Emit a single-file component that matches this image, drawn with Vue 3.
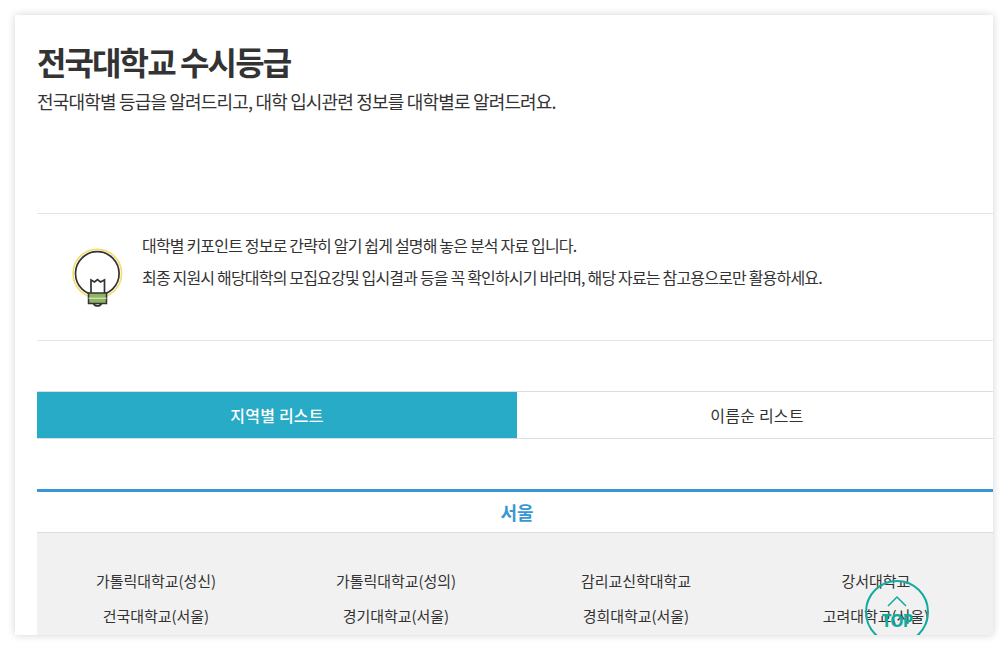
<template>
  <div class="page">
    <div class="card">
      <div class="head">
        <h1>전국대학교 수시등급</h1>
        <p>전국대학별 등급을 알려드리고, 대학 입시관련 정보를 대학별로 알려드려요.</p>
      </div>

      <div class="notice">
        <svg class="bulb" width="54" height="62" viewBox="0 0 54 62">
          <circle cx="27.3" cy="25.5" r="24.3" fill="#fff" stroke="#f6dc6a" stroke-width="1.6" />
          <circle cx="27.3" cy="25.5" r="21.8" fill="#fff" stroke="#333" stroke-width="1.7" />
          <path d="M21 45V32l3.5 2 3-2.5 3 2.5 4-2v13" fill="#fff" stroke="#333" stroke-width="1.7" />
          <path d="M23.5 55.5a4.5 4.5 0 0 0 8 0" fill="#fff" stroke="#333" stroke-width="1.7" />
          <rect x="18.5" y="45" width="18" height="10.5" fill="#8fb564" stroke="#333" stroke-width="1.5" />
          <path d="M18.5 50.2h18" stroke="#e8efd8" stroke-width="1" />
        </svg>
        <div class="notice-text">
          <p>대학별 키포인트 정보로 간략히 알기 쉽게 설명해 놓은 분석 자료 입니다.</p>
          <p>최종 지원시 해당대학의 모집요강및 입시결과 등을 꼭 확인하시기 바라며, 해당 자료는 참고용으로만 활용하세요.</p>
        </div>
      </div>

      <div class="tabs">
        <button
          v-for="(tab, i) in tabs"
          :key="tab"
          class="tab"
          :class="{ active: i === activeTab }"
          @click="activeTab = i"
        >{{ tab }}</button>
      </div>

      <div class="region">서울</div>
      <ul class="schools">
        <li v-for="school in schools" :key="school">{{ school }}</li>
      </ul>

      <a class="top" href="#">
        <svg width="20" height="12" viewBox="0 0 20 12">
          <path d="M1 11l9-9 9 9" fill="none" stroke="#10ab9f" stroke-width="1.5" />
        </svg>
        <span>TOP</span>
      </a>
    </div>
  </div>
</template>

<script setup>
import { ref } from 'vue';

const tabs = ['지역별 리스트', '이름순 리스트'];
const activeTab = ref(0);

const schools = [
  '가톨릭대학교(성신)',
  '가톨릭대학교(성의)',
  '감리교신학대학교',
  '강서대학교',
  '건국대학교(서울)',
  '경기대학교(서울)',
  '경희대학교(서울)',
  '고려대학교(서울)',
];
</script>

<style>
html,
body {
  background: #fff;
  overflow: hidden;
}
</style>

<style scoped>
.page {
  height: 650px;
  padding: 15px;
  box-sizing: border-box;
  font-family: "Noto Sans CJK KR", "Noto Sans", sans-serif;
  color: #333;
}

.card {
  position: relative;
  height: 620px;
  padding-left: 22px;
  background: #fff;
  box-shadow: 0 0 8px rgba(0, 0, 0, 0.18);
  overflow: hidden;
}

.head {
  height: 198px;
  padding-top: 23px;
  box-sizing: border-box;
}

h1 {
  margin: 0;
  font-size: 32px;
  line-height: 46px;
  font-weight: 700;
  letter-spacing: -1.9px;
}

.head p {
  margin: 4px 0 0;
  font-size: 18px;
  line-height: 26px;
  letter-spacing: -0.82px;
}

.notice {
  display: flex;
  height: 128px;
  box-sizing: border-box;
  padding: 20px 0 0 33px;
  border-top: 1px solid #e4e4e4;
  border-bottom: 1px solid #e4e4e4;
}

.bulb {
  margin: 14px 18px 0 0;
  flex: none;
}

.notice-text p {
  margin: 0 0 10px;
  font-size: 16px;
  line-height: 22px;
  letter-spacing: -0.82px;
}

.tabs {
  display: flex;
  width: 960px;
  margin-top: 50px;
  height: 48px;
  box-sizing: border-box;
  border-top: 1px solid #ddd;
  border-bottom: 1px solid #ddd;
}

.tab {
  flex: none;
  width: 480px;
  padding: 0;
  border: 0;
  background: #fff;
  color: #333;
  font: inherit;
  font-size: 16px;
  letter-spacing: 0.2px;
}

.tab.active {
  background: #27abc6;
  color: #fff;
  font-weight: 500;
}

.region {
  margin-top: 50px;
  width: 960px;
  height: 44px;
  box-sizing: border-box;
  border-top: 3px solid #3597d3;
  border-bottom: 1px solid #ddd;
  text-align: center;
  line-height: 41px;
  font-size: 18px;
  font-weight: 700;
  color: #3a97d4;
}

.schools {
  display: grid;
  grid-template-columns: repeat(4, 240px);
  width: 960px;
  margin: 0;
  padding: 36px 0 0;
  list-style: none;
  background: #f1f1f1;
  height: 200px;
  box-sizing: border-box;
  align-content: start;
  row-gap: 11px;
}

.schools li {
  padding-right: 2px;
  text-align: center;
  font-size: 15px;
  line-height: 24px;
  letter-spacing: -0.05px;
}

.top {
  position: absolute;
  left: 850px;
  top: 565px;
  width: 64px;
  height: 64px;
  box-sizing: border-box;
  border: 2px solid #10ab9f;
  border-radius: 50%;
  text-decoration: none;
  text-align: center;
  color: #10ab9f;
}

.top svg {
  display: block;
  margin: 13px auto 0;
}

.top span {
  display: block;
  font-family: "Noto Sans", sans-serif;
  font-size: 17px;
  line-height: 18px;
  font-weight: 700;
  letter-spacing: -1px;
  margin-top: 5px;
}
</style>
